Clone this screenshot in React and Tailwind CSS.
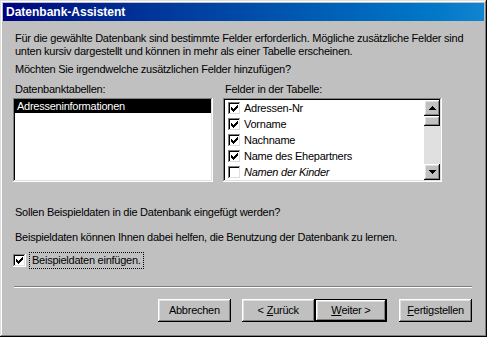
import React from 'react';

const raised = 'shadow-[inset_-1px_-1px_#000,inset_1px_1px_#fff,inset_-2px_-2px_#808080,inset_2px_2px_#dfdfdf]';
const sunken = 'shadow-[inset_-1px_-1px_#fff,inset_1px_1px_#808080,inset_-2px_-2px_#dfdfdf,inset_2px_2px_#000]';

const Check = ({ checked }) => (
  <span className={`relative inline-block w-[13px] h-[13px] shrink-0 bg-white ${sunken}`}>
    {checked && (
      <svg width="7" height="7" viewBox="0 0 7 7" className="absolute left-[3px] top-[3px]" shapeRendering="crispEdges">
        <path
          d="M6 0h1v1h-1zM5 1h2v1h-2zM0 2h1v1h-1zM4 2h3v1h-3zM0 3h2v1h-2zM3 3h3v1h-3zM0 4h5v1h-5zM1 5h3v1h-3zM2 6h1v1h-1z"
          fill="#000"
        />
      </svg>
    )}
  </span>
);

const Arrow = ({ down }) => (
  <svg width="7" height="4" viewBox="0 0 7 4" shapeRendering="crispEdges">
    {down ? (
      <path d="M0 0h7v1h-1v1h-1v1h-1v1h-1v-1h-1v-1h-1v-1h-1z" fill="#000" />
    ) : (
      <path d="M3 0h1v1h1v1h1v1h1v1h-7v-1h1v-1h1v-1h1z" fill="#000" />
    )}
  </svg>
);

const Button = ({ children, isDefault, className = '' }) => (
  <div className={`w-[73px] h-[23px] ${isDefault ? 'border border-black' : ''} ${className}`}>
    <button className={`w-full h-full bg-[#c0c0c0] ${raised} flex items-center justify-center text-[11px] text-black`}>
      {children}
    </button>
  </div>
);

const fields = [
  { name: 'Adressen-Nr', checked: true },
  { name: 'Vorname', checked: true },
  { name: 'Nachname', checked: true },
  { name: 'Name des Ehepartners', checked: true },
  { name: 'Namen der Kinder', checked: false, italic: true },
];

export default function App() {
  return (
    <div
      className="w-[487px] h-[337px] bg-[#c0c0c0] p-[3px] flex flex-col text-black shadow-[inset_-1px_-1px_#000,inset_1px_1px_#dfdfdf,inset_-2px_-2px_#808080,inset_2px_2px_#fff]"
      style={{ fontFamily: '"Liberation Sans", Arial, sans-serif' }}
    >
      {/* Title bar */}
      <div className="h-[18px] bg-gradient-to-r from-[#000080] to-[#1084d0] flex items-center pl-[3px]">
        <span className="text-white font-bold text-[12px] leading-none">Datenbank-Assistent</span>
      </div>

      <div className="flex-1 flex flex-col px-[12px] text-[11px] leading-[13px] tracking-[-0.25px]">
        <p className="mt-[11px]">
          Für die gewählte Datenbank sind bestimmte Felder erforderlich. Mögliche zusätzliche Felder sind
          <br />
          unten kursiv dargestellt und können in mehr als einer Tabelle erscheinen.
        </p>
        <p className="mt-[5px]">Möchten Sie irgendwelche zusätzlichen Felder hinzufügen?</p>

        <div className="flex mt-[7px]">
          <div className="flex flex-col ml-[-2px]">
            <span className="ml-[2px]">Datenbanktabellen:</span>
            <div className={`mt-[2px] w-[200px] h-[84px] bg-white p-[2px] ${sunken}`}>
              <div className="bg-black text-white h-[13px] leading-[13px] pl-[2px]">Adresseninformationen</div>
            </div>
          </div>

          <div className="flex flex-col ml-[10px]">
            <span className="ml-[2px]">Felder in der Tabelle:</span>
            <div className={`mt-[2px] w-[219px] h-[84px] bg-white p-[2px] flex ${sunken}`}>
              <div className="flex-1 overflow-hidden flex flex-col pl-[3px]">
                {fields.map((f) => (
                  <div key={f.name} className="h-[16px] shrink-0 flex items-center gap-[3px]">
                    <Check checked={f.checked} />
                    <span className={f.italic ? 'italic' : ''}>{f.name}</span>
                  </div>
                ))}
                <div className="h-[16px] shrink-0 flex items-center">
                  <Check />
                </div>
              </div>
              <div className="w-[16px] flex flex-col bg-[#e0e0e0]">
                <div className={`h-[16px] bg-[#c0c0c0] ${raised} flex items-center justify-center`}>
                  <Arrow />
                </div>
                <div className={`h-[10px] bg-[#c0c0c0] ${raised}`} />
                <div className="flex-1" />
                <div className={`h-[16px] bg-[#c0c0c0] ${raised} flex items-center justify-center`}>
                  <Arrow down />
                </div>
              </div>
            </div>
          </div>
        </div>

        <p className="mt-[24px]">Sollen Beispieldaten in die Datenbank eingefügt werden?</p>
        <p className="mt-[12px]">Beispieldaten können Ihnen dabei helfen, die Benutzung der Datenbank zu lernen.</p>

        <label className="flex items-center mt-[8px] ml-[-2px]">
          <Check checked />
          <span className="ml-[3px] px-[2px] py-[1px] border border-dotted border-black">Beispieldaten einfügen.</span>
        </label>

        <div className="mt-[17px] h-[2px] border-t border-t-[#808080] border-b border-b-white ml-[-1px]" />

        <div className="flex mt-[11px] ml-[143px]">
          <Button>Abbrechen</Button>
          <Button className="ml-[11px]">
            &lt; <u className="ml-[3px]">Z</u>urück
          </Button>
          <Button isDefault>
            <u>W</u>eiter &gt;
          </Button>
          <Button className="ml-[12px]">
            <u>F</u>ertigstellen
          </Button>
        </div>
      </div>
    </div>
  );
}
